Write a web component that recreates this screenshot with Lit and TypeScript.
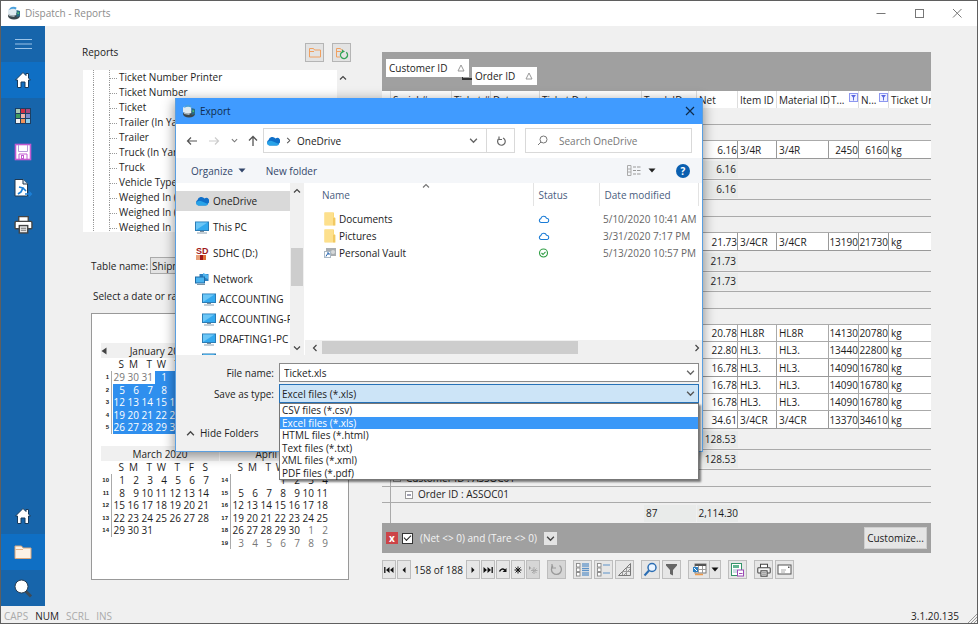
import { LitElement, html, css, svg, nothing } from "lit";
import { customElement, property, state } from "lit/decorators.js";
import { classMap } from "lit/directives/class-map.js";

const icon = (w: number, h: number, body: unknown, label = "") => html`<svg
  width=${w} height=${h} viewBox="0 0 ${w} ${h}" fill="none"
  role=${label ? "img" : "presentation"} aria-label=${label || nothing}>${body}</svg>`;

const truck = () => icon(14, 14, svg`
  <ellipse cx="7" cy="10" rx="6" ry="3.5" fill="#3b474d"/>
  <path d="M1 8V3.5Q4 1 9 2.5L9.5 9Q5 11 1 8Z" fill="#dfeaf0"/>
  <path d="M3 2Q6 0 9.500 1.500L9 3.500Q6 2 2 4Z" fill="#4aa0dc"/>
  <path d="M9.500 4L13 5V10L9.500 11Z" fill="#2a6c86"/>
  <path d="M10.500 6L12 6.500V8L10.500 8Z" fill="#4fc36a"/>
  <path d="M2 8.500L8 10L7 11L2 10Z" fill="#a9b5ba"/>`);

const house = () => icon(18, 18, svg`
  <path d="M9 1.500L1.500 9H3.500V16.500H7V11H11V16.500H14.500V9H16.500L14.500 7V2.500H12V4.500Z"
    fill="#fff" stroke="#163a5c" stroke-width="1"/>`);

const colorGrid = () => {
  const c = ["#a8c8b4", "#d22f45", "#a8487c", "#3f9a5e", "#f0b0a8", "#7d8fd0", "#f2f2f2", "#f0935a", "#8dd0ee"];
  return icon(16, 16, svg`<rect width="16" height="16" fill="#1d3f63"/>${c.map((f, i) =>
    svg`<rect x=${1 + (i % 3) * 5} y=${1 + Math.floor(i / 3) * 5} width="4" height="4" fill=${f}/>`)}`);
};

const floppy = () => icon(18, 18, svg`
  <rect x="1.500" y="1.500" width="15" height="15" fill="#fff" stroke="#c25bd0" stroke-width="1.600"/>
  <path d="M4.500 2V8.500H13.500V2" stroke="#b99ad8"/>
  <path d="M5 16V11H13V16" stroke="#c25bd0"/><rect x="7.500" y="12.500" width="2" height="3" stroke="#c25bd0"/>`);

const exportDoc = () => icon(20, 20, svg`
  <path d="M2 1.500H10L14.500 6V18H2Z" fill="#fff" stroke="#22384e"/>
  <path d="M10 1.500V6H14.500" fill="#dce6ee" stroke="#22384e"/>
  <path d="M6 9L10 10L8 14L5 16M10 10L13 13" stroke="#1c7fd6" stroke-width="1.700"/>
  <path d="M12 16H18M16 13.500L18.500 16L16 18.500" stroke="#1c7fd6" stroke-width="1.300"/>`);

const printer = (s: number, dark: boolean) => html`<svg width=${s} height=${s} viewBox="0 0 18 18" fill="none" role="presentation">
  <path d="M4.500 6V1.500H13.500V6" fill="#fff" stroke="#444" stroke-width="1.300"/>
  <rect x="1" y="6" width="16" height="7" rx="1" fill=${dark ? "#fff" : "#f4f4f4"} stroke="#444" stroke-width="1.300"/>
  <rect x="5" y="10" width="8" height="7" fill="#e8e8e8" stroke="#444" stroke-width="1.300"/>
  <path d="M6.500 12.500H11.500M6.500 14.500H11.500" stroke="#777"/></svg>`;

const folderBig = () => icon(18, 16, svg`
  <path d="M1 14.500V2H7.500L9 4H17V14.500Z" fill="#fdf3e6" stroke="#d9a77c"/><path d="M1.500 5.500H9" stroke="#e5b48c"/>`);

const searchBig = () => icon(20, 20, svg`
  <path d="M12.500 13L18 18.500" stroke="#3d4a56" stroke-width="3"/>
  <circle cx="8.500" cy="8.500" r="6.500" fill="#fff" stroke="#2a3e52" stroke-width="1"/>`);

const folderLine = (refresh: boolean) => icon(14, 14, svg`
  <path d="M1.500 11V2.500H5.500L6.500 4H${refresh ? 8 : 12.5}M1.500 11H${refresh ? 5 : 12.5}${refresh ? "" : "V4"}M1.500 5.500H6" stroke="#f0a060"/>
  ${refresh ? svg`<circle cx="9" cy="9" r="3.500" stroke="#35a457" stroke-width="1.400" stroke-dasharray="18 4" transform="rotate(-50 9 9)"/>
    <path d="M7 3.500L10 5.500L7 7Z" fill="#35a457"/>` : nothing}`);

const cloud = (x = 14) => icon(x, 10, svg`
  <path d="M3.500 9.500A3 3 0 0 1 2.500 4A4 4 0 0 1 9.500 2.500A3 3 0 0 1 13 7.500Q12.500 9.500 10.500 9.500Z" fill="#0f6fc9"/>
  <path d="M3.500 9.500Q1 9 1 6.500Q4 3.500 7 5.500L13 8Q12.500 9.500 10.500 9.500Z" fill="#29a3e8"/>`);

const cloudLine = () => icon(12, 10, svg`
  <path d="M3 8.500A2 2 0 0 1 2.800 4.600A3 3 0 0 1 8.500 4.200A2.200 2.200 0 0 1 9.200 8.500Z" stroke="#1b7cd6" stroke-width="1.100"/>`, "Online only");

const checkRing = () => icon(12, 10, svg`
  <circle cx="5.500" cy="5" r="4" stroke="#2f9e44" stroke-width="1.100"/><path d="M3.500 5L5 6.500L7.500 3.800" stroke="#2f9e44" stroke-width="1.100"/>`, "Available");

const monitor = () => icon(14, 13, svg`
  <rect x=".5" y="1" width="13" height="8.500" fill="#33a9ee" stroke="#2b7cb5"/>
  <path d="M1 9L12.500 1.500H1Z" fill="#6cc6f6"/><path d="M5 10H9V11H5Z" fill="#7a8a96"/><path d="M2 12H12" stroke="#8ba0b0"/>`);

const network = () => icon(14, 13, svg`
  <rect x="4.500" y="1" width="9" height="7" fill="#2c7fc0"/><path d="M8 0L13 2V6L8 4Z" fill="#4fb4ef"/>
  <rect x=".5" y="4" width="9" height="6" fill="#4ab4f0" stroke="#1f6ba5"/><path d="M2 11.500H10" stroke="#7f95a5"/>`);

const sdCard = () => html`<span class="sd" aria-hidden="true">SD${icon(10, 5, svg`
  <rect width="4" height="5" fill="#e8a07a"/><rect x="4" width="3" height="5" fill="#a01818"/><rect x="7" width="3" height="5" fill="#e07038"/>`)}</span>`;

const yellowFolder = () => icon(12, 14, svg`
  <path d="M.5 .5H10V5L11.500 6V13.500H.5Z" fill="#fbd979"/><path d="M.5 .5H9V13H.5Z" fill="#fde08d"/><path d="M10 6V13.500" stroke="#e8b94e"/>`);

const vault = () => icon(12, 12, svg`
  <rect x="2" y="1" width="10" height="8" fill="#a8adb1"/><circle cx="9" cy="5" r="2" fill="#d5d8da"/>
  <rect x=".5" y="4.500" width="6" height="6" fill="#fff" stroke="#aab8c4"/><path d="M2 9.500Q2.500 7 4.500 6.500M3 6H5V8" stroke="#2463ad"/>`);

const chevron = (dir: "up" | "down" | "left" | "right", size = 8, color = "#444") => {
  const d = { up: "M1 5.500L4 2.500L7 5.500", down: "M1 2.500L4 5.500L7 2.500", left: "M5.500 1L2.500 4L5.500 7", right: "M2.500 1L5.500 4L2.500 7" }[dir];
  return html`<svg width=${size} height=${size} viewBox="0 0 8 8" fill="none" role="presentation"><path d=${d} stroke=${color} stroke-width="1.200"/></svg>`;
};

const caret = (color = "#222") => icon(8, 5, svg`<path d="M.5 .5H7.500L4 4.500Z" fill=${color}/>`);
const triUp = () => icon(8, 8, svg`<path d="M4 1L7 7H1Z" stroke="#999"/>`);
const funnelBox = () => icon(9, 9, svg`
  <rect x=".5" y=".5" width="8" height="8" fill="#eef0ff" stroke="#8d97f0"/><path d="M2 2H7L5 4.500V7.500H4V4.500Z" fill="#5a67e0"/>`, "Filtered");

const nav = {
  first: () => icon(10, 8, svg`<path d="M.8 1V7" stroke="#111" stroke-width="1.300"/><path d="M5.500 1V7L2 4ZM9.500 1V7L6 4Z" fill="#111"/>`),
  prev: () => icon(6, 8, svg`<path d="M4.500 1V7L1.500 4Z" fill="#111"/>`),
  next: () => icon(6, 8, svg`<path d="M1.500 1V7L4.500 4Z" fill="#111"/>`),
  last: () => icon(10, 8, svg`<path d="M9.200 1V7" stroke="#111" stroke-width="1.300"/><path d="M.5 1V7L4 4ZM4.500 1V7L8 4Z" fill="#111"/>`),
  jump: () => icon(10, 8, svg`<path d="M1.500 5.500Q3.500 1.500 7 4" stroke="#111" stroke-width="1.500"/><path d="M8.500 2V6H4.500Z" fill="#111"/>`),
  star: () => icon(10, 8, svg`<path d="M5 .5V7.500M1.500 4H8.500M2.500 1.500L7.500 6.500M7.500 1.500L2.500 6.500" stroke="#111"/>`),
  starOff: () => icon(10, 8, svg`<path d="M6 1V8M3 4.500H9.500M4 2.500L8.500 7M8.500 2.500L4 7" stroke="#aaa"/><path d="M1 0V4L3 2Z" fill="#999"/>`),
};

const tool = {
  refresh: () => icon(15, 15, svg`<path d="M4 3.800A5 5 0 1 0 10.500 3.500" stroke="#999" stroke-width="1.300"/><path d="M3 2V6H7" stroke="#999" stroke-width="1.200"/>`),
  cards: (blue: boolean) => icon(15, 15, svg`
    ${[1, 5.5, 10].map((y) => svg`<rect x="1.500" y=${y + 0.5} width="3.500" height="3.500" fill="#fff" stroke="#888" stroke-width=".9"/>`)}
    ${blue ? [2, 4, 6.5, 8.5, 11, 13].map((y) => svg`<path d=${`M7 ${y}H14`} stroke="#5c92c8" stroke-width="1.300"/>`)
           : [3, 11].map((y) => svg`<path d=${`M7 ${y}H14`} stroke="#5c92c8"/>`)}`),
  ruler: () => icon(15, 15, svg`<path d="M1.500 13.500L13.500 1.500V13.500Z" stroke="#777"/><path d="M5.500 13V9.500H13M9.500 13V5.500H13M7 13L13 7" stroke="#999"/>`),
  lens: () => icon(15, 15, svg`<circle cx="9" cy="5.500" r="4" fill="#eaf4ff" stroke="#2b6db3" stroke-width="1.500"/><path d="M6 8.500L1.500 13.500" stroke="#2b6db3" stroke-width="2"/>`),
  funnel: () => icon(15, 15, svg`<path d="M2 2H13V3.500L9 8V13.500L6 12V8L2 3.500Z" fill="#666"/>`),
  table: () => icon(15, 15, svg`<rect x="3" y="2" width="11" height="9" fill="#fff" stroke="#777"/><path d="M3 3H14" stroke="#555" stroke-width="2"/>
    <path d="M3 7.500H14M6.500 4V11M10.500 4V11" stroke="#999"/><rect x="1" y="5" width="5" height="5" fill="#2a7fc4"/><path d="M2 6L5 9" stroke="#fff"/><path d="M3 12.500H11" stroke="#ef9a4a" stroke-width="1.500"/>`),
  saveGreen: () => icon(15, 15, svg`<rect x="1.500" y="1.500" width="10" height="12" fill="#fff" stroke="#35946a"/><rect x="3" y="3" width="6" height="3" fill="#63b491"/>
    <path d="M3 8H7M3 10H7" stroke="#9bc"/><rect x="7.500" y="8" width="6" height="6" fill="#fff" stroke="#9a48b5"/><path d="M9 11.500H12.500" stroke="#9a48b5"/>`),
  mail: () => icon(15, 15, svg`<rect x="1" y="3" width="13" height="9" fill="#fff" stroke="#555"/><path d="M4 8H9M4 10H8" stroke="#aaa"/><rect x="11" y="4.500" width="1.500" height="1.500" fill="#555"/>`),
};

interface Month { name: string; weeks: number[]; offset: number; days: number; back?: boolean; selected?: boolean; lead?: number[]; trail?: number[]; }

@customElement("month-view")
class MonthView extends LitElement {
  @property({ attribute: false }) month!: Month;

  static styles = css`
    :host { display: block; font-size: 10px; }
    header { display: grid; grid-template-columns: 10px 1fr 10px; align-items: center; height: 15px; background: #f0f0f0; text-align: center; white-space: nowrap; }
    button { border: 0; background: none; padding: 0; display: flex; justify-content: flex-end; }
    .grid { display: grid; grid-template-columns: 10px 2px repeat(7, 14px); height: 88px; grid-template-rows: 13px repeat(6, 1fr); line-height: 12px; }
    .day, .dow { text-align: right; padding-right: 2px; }
    .dow { padding-right: 3px; }
    .week { font: bold 6px/12px "Liberation Sans", sans-serif; text-align: right; padding-right: 2px; }
    .rule { border-left: 1px solid #aaa; }
    .muted { color: #777; }
    .sel { background: #2f8fee; color: #fff; }
  `;

  render() {
    const m = this.month;
    const cells: { n: number | null; cur: boolean }[] = [
      ...(m.lead ?? Array(m.offset).fill(null)).map((n) => ({ n, cur: false })),
      ...Array.from({ length: m.days }, (_, i) => ({ n: i + 1, cur: true })),
      ...(m.trail ?? []).map((n) => ({ n, cur: false })),
    ];
    return html`
      <header>
        <span>${m.back ? html`<button aria-label="Previous month">${icon(6, 8, svg`<path d="M5.500 .5V7.500L.5 4Z" fill="#444"/>`)}</button>` : nothing}</span>
        <span>${m.name}</span>
      </header>
      <div class="grid">
        <span></span><span></span>${["S", "M", "T", "W", "T", "F", "S"].map((d) => html`<span class="dow">${d}</span>`)}
        ${m.weeks.map((w, r) => html`
          <span class="week">${w}</span><span class="rule"></span>
          ${Array.from({ length: 7 }, (_, c) => {
            const cell = cells[r * 7 + c];
            return html`<span class=${classMap({ day: true, muted: !!cell && !cell.cur, sel: !!m.selected && !!cell?.cur })}>${cell?.n ?? ""}</span>`;
          })}`)}
      </div>`;
  }
}

const MONTHS: Month[] = [
  { name: "January 2020", weeks: [1, 2, 3, 4, 5], back: true, selected: true, lead: [29, 30, 31], days: 31, offset: 3 },
  { name: "February 2020", weeks: [5, 6, 7, 8, 9], selected: true, days: 29, offset: 6 },
  { name: "March 2020", weeks: [10, 11, 12, 13, 14], days: 31, offset: 0 },
  { name: "April 2020", weeks: [14, 15, 16, 17, 18, 19], days: 30, offset: 3, trail: [1, 2, 3, 4, 5, 6, 7, 8, 9] },
];

@customElement("export-dialog")
class ExportDialog extends LitElement {
  @state() private picked = 1;

  private types = ["CSV files (*.csv)", "Excel files (*.xls)", "HTML files (*.html)", "Text files (*.txt)", "XML files (*.xml)", "PDF files (*.pdf)"];

  static styles = css`
    * { box-sizing: border-box; }
    :host { display: flex; flex-direction: column; border: 1px solid #5a9fe0; border-top: 0; background: #fff; color: #222; box-shadow: 0 3px 12px rgba(0, 0, 0, 0.45); }
    svg { display: block; flex: none; }
    button { font: inherit; color: inherit; border: 0; background: none; padding: 0; display: flex; align-items: center; gap: 5px; }
    input, select { font: inherit; color: inherit; appearance: none; border: 0; background: none; padding: 0; outline: 0; min-width: 0; }
    .title { display: flex; align-items: center; gap: 4px; height: 26px; padding: 0 6px; background: #409bff; color: #0f2c4c; }
    .title span { flex: 1; }
    .nav { display: flex; align-items: center; height: 34px; padding: 0 10px 1px; gap: 10px; }
    .arrows { display: flex; align-items: center; justify-content: space-between; width: 72px; }
    .box { display: flex; align-items: center; height: 25px; border: 1px solid #d9d9d9; }
    .address { flex: 1; gap: 5px; padding-left: 2px; margin-left: -5px; }
    .address .path { flex: 1; }
    .address .reload { height: 23px; width: 28px; border-left: 1px solid #d9d9d9; justify-content: center; margin-left: 3px; }
    .search { width: 167px; gap: 11px; padding-left: 11px; }
    .search input::placeholder { color: #777; opacity: 1; }
    .tools { display: flex; align-items: center; height: 25px; padding: 0 12px 0 15px; gap: 20px; background: #f4f6f9; color: #33466b; }
    .tools .view { margin-left: auto; gap: 7px; color: #222; }
    .help { width: 14px; height: 14px; border-radius: 50%; background: #0a5fb0; color: #fff; font-weight: bold; justify-content: center; }
    .body { display: flex; height: 172px; }
    .places { width: 114px; padding: 8px 0 0; margin: 0; list-style: none; overflow: hidden; flex: none; }
    .places li { display: flex; align-items: center; gap: 4px; height: 20px; padding-left: 19px; white-space: nowrap; margin-bottom: 6px; }
    .places li.child { padding-left: 26px; gap: 3px; margin: 0; }
    .places li.tight { margin-bottom: 0; }
    .places li.on { background: #d9d9d9; }
    .sd { width: 14px; padding-left: 1px; color: #a01818; font: bold 9px/8px "Liberation Sans", sans-serif; }
    .vbar { width: 14px; display: flex; flex-direction: column; align-items: center; background: #f0f0f0; padding: 4px 0 3px; flex: none; }
    .vthumb { width: 12px; height: 38px; background: #cdcdcd; margin-top: 53px; }
    .vbar svg:last-child { margin-top: auto; }
    .files { flex: 1; display: flex; flex-direction: column; min-width: 0; padding-left: 1px; }
    table { border-collapse: collapse; table-layout: fixed; width: 100%; }
    th { font-weight: normal; text-align: left; height: 23px; color: #4a5d7e; padding: 0 0 0 5px; border-right: 1px solid #e3e3e3; }
    th.name { padding-left: 17px; position: relative; }
    .sort { position: absolute; right: 103px; top: -1px; }
    td { height: 17px; padding: 0 0 0 5px; white-space: nowrap; }
    td.name { padding-left: 19px; }
    td span { display: flex; align-items: center; gap: 3px; }
    td.dim { color: #666; padding-left: 4px; }
    tr.space td { height: 4px; }
    .hbar { display: flex; align-items: center; gap: 3px; height: 15px; margin-top: auto; padding: 0 1px 0 6px; background: #f0f0f0; }
    .hthumb { width: 256px; height: 13px; background: #cdcdcd; }
    .hbar svg:last-child { margin-left: auto; }
    form { flex: 1; display: grid; grid-template-columns: 98px 1fr; grid-auto-rows: 19px; column-gap: 5px; row-gap: 2px; padding: 8px 3px 0 0; background: #f0f0f0; position: relative; align-content: start; align-items: center; }
    label { text-align: right; }
    .field { display: flex; align-items: center; height: 19px; border: 1px solid #8a8a8a; background: #fff; padding: 0 3px 0 4px; }
    .field input, .field select { flex: 1; }
    .field.open { background: #cce4f7; border-color: #2672b8; padding-left: 2px; }
    .hide { grid-column: 1 / 3; margin: 37px 0 0 10px; gap: 5px; }
    .list { position: absolute; z-index: 2; left: 103px; right: 3px; top: 48px; margin: 0; padding: 0; list-style: none; display: grid; grid-template-rows: repeat(6, 1fr); height: 77px; background: #fff; border: 1px solid #777; box-shadow: 2px 2px 2px rgba(0, 0, 0, 0.5); line-height: 12px; color: #222; }
    .list li { padding-left: 2px; }
    .list li.on { background: #3a98f8; color: #fff; }
  `;

  render() {
    return html`
      <div class="title">${truck()}<span>Export</span>
        <button aria-label="Close">${icon(12, 12, svg`<path d="M2 2L10 10M10 2L2 10" stroke="#0f2c4c" stroke-width="1.200"/>`)}</button></div>
      <div class="nav">
        <div class="arrows">
          <button aria-label="Back">${icon(12, 10, svg`<path d="M11 5H1.500M5 1.500L1.500 5L5 8.500" stroke="#555" stroke-width="1.200"/>`)}</button>
          <button aria-label="Forward">${icon(12, 10, svg`<path d="M1 5H10.500M7 1.500L10.500 5L7 8.500" stroke="#ccc" stroke-width="1.200"/>`)}</button>
          <button aria-label="Recent locations">${chevron("down", 7, "#777")}</button>
          <button aria-label="Up">${icon(10, 12, svg`<path d="M5 11V1.500M1 5.500L5 1.500L9 5.500" stroke="#555" stroke-width="1.300"/>`)}</button>
        </div>
        <div class="box address">${cloud()}${chevron("right", 7, "#555")}<span class="path">OneDrive</span>${chevron("down", 9, "#666")}
          <button class="reload" aria-label="Refresh">${icon(10, 10, svg`<path d="M2.500 3A3.800 3.800 0 1 0 7 2" stroke="#666" stroke-width="1.200"/><path d="M3 .5V3.500H6" stroke="#666" stroke-width="1.200"/>`)}</button></div>
        <div class="box search">${icon(11, 11, svg`<circle cx="6.500" cy="4.500" r="3.500" stroke="#777"/><path d="M4 7L1 10" stroke="#777"/>`)}
          <input type="search" aria-label="Search OneDrive" placeholder="Search OneDrive"></div>
      </div>
      <div class="tools">
        <button>Organize ${caret("#33466b")}</button><button>New folder</button>
        <button class="view" aria-label="Change view">${icon(14, 11, svg`<path d="M.5 .5H4V10.500H.5ZM.5 4H4M.5 7H4" stroke="#aaa"/>
          <path d="M6 2H9M10 2H13.500M6 5.500H9M10 5.500H13.500M6 9H9M10 9H13.500" stroke="#999"/>`)}${caret()}</button>
        <button class="help" aria-label="Help">?</button>
      </div>
      <div class="body">
        <ul class="places">
          <li class="on">${cloud()}OneDrive</li>
          <li>${monitor()}This PC</li>
          <li>${sdCard()}SDHC (D:)</li>
          <li class="tight">${network()}Network</li>
          ${["ACCOUNTING", "ACCOUNTING-PC", "DRAFTING1-PC", "DRAFTING2-PC"].map((n) => html`<li class="child">${monitor()}${n}</li>`)}
        </ul>
        <div class="vbar">${chevron("up")}<div class="vthumb"></div>${chevron("down")}</div>
        <div class="files">
          <table>
            <colgroup><col><col style="width:66px"><col style="width:99px"><col style="width:4px"></colgroup>
            <thead><tr><th class="name">Name<span class="sort">${chevron("up", 8, "#777")}</span></th><th>Status</th><th>Date modified</th><td></td></tr></thead>
            <tbody>
              <tr class="space"><td colspan="4"></td></tr>
              <tr><td class="name"><span>${yellowFolder()}Documents</span></td><td>${cloudLine()}</td><td class="dim">5/10/2020 10:41 AM</td></tr>
              <tr><td class="name"><span>${yellowFolder()}Pictures</span></td><td>${cloudLine()}</td><td class="dim">3/31/2020 7:17 PM</td></tr>
              <tr><td class="name"><span>${vault()}Personal Vault</span></td><td>${checkRing()}</td><td class="dim">5/13/2020 10:57 PM</td></tr>
            </tbody>
          </table>
          <div class="hbar">${chevron("left")}<div class="hthumb"></div>${chevron("right")}</div>
        </div>
      </div>
      <form @submit=${(e: Event) => e.preventDefault()}>
        <label for="file">File name:</label>
        <div class="field"><input id="file" type="text" value="Ticket.xls">${chevron("down", 9, "#666")}</div>
        <label for="type">Save as type:</label>
        <div class="field open"><select id="type">${this.types.map((t, i) => html`<option ?selected=${i === this.picked}>${t}</option>`)}</select>${chevron("down", 9, "#555")}</div>
        <button class="hide" type="button">${chevron("up", 9)}Hide Folders</button>
        <ul class="list" role="listbox" aria-label="File types">
          ${this.types.map((t, i) => html`<li role="option" aria-selected=${i === this.picked} class=${classMap({ on: i === this.picked })} @click=${() => (this.picked = i)}>${t}</li>`)}
        </ul>
      </form>`;
  }
}

type Row =
  | { kind: "outer" | "inner"; label: string }
  | { kind: "data"; cells: string[]; tall?: boolean }
  | { kind: "foot" | "sub" | "total"; count: string; net: string };

const data = (net: string, item: string, tare: string, gross: string, tall = false): Row => ({ kind: "data", cells: [net, item, item, tare, gross, "kg"], tall });

const ROWS: Row[] = [
  { kind: "outer", label: "Customer ID : ABC01" }, { kind: "inner", label: "Order ID : ABC01" },
  data("6.16", "3/4R", "2450", "6160", true),
  { kind: "foot", count: "1", net: "6.16" }, { kind: "sub", count: "1", net: "6.16" },
  { kind: "outer", label: "Customer ID : ACME01" }, { kind: "inner", label: "Order ID : ACME01" },
  data("21.73", "3/4CR", "13190", "21730", true),
  { kind: "foot", count: "1", net: "21.73" }, { kind: "sub", count: "1", net: "21.73" },
  { kind: "outer", label: "Customer ID : AGG01" }, { kind: "inner", label: "Order ID : AGG01" },
  data("20.78", "HL8R", "14130", "20780"), data("22.80", "HL3.", "13440", "22800"), data("16.78", "HL3.", "14090", "16780", true),
  data("16.78", "HL3.", "14090", "16780"), data("16.78", "HL3.", "14090", "16780"), data("34.61", "3/4CR", "13370", "34610", true),
  { kind: "foot", count: "6", net: "128.53" }, { kind: "sub", count: "6", net: "128.53" },
  { kind: "outer", label: "Customer ID : ASSOC01" }, { kind: "inner", label: "Order ID : ASSOC01" },
  { kind: "total", count: "87", net: "2,114.30" },
];

@customElement("app-root")
class AppRoot extends LitElement {
  static styles = css`
    * { box-sizing: border-box; }
    :host { display: flex; flex-direction: column; min-height: 100vh; box-sizing: border-box; position: relative; border: 1px solid #5f5f5f; background: #f0f0f0; color: #1c1c1c; font: 10px/14px "Open Sans", "Noto Sans", sans-serif; overflow: hidden; }
    svg { display: block; flex: none; }
    button { font: inherit; color: inherit; padding: 0; border: 0; background: none; display: flex; align-items: center; justify-content: center; }
    .titlebar { display: flex; align-items: center; gap: 4px; height: 25px; padding: 0 14px 2px 6px; background: #fff; color: #8c8c8c; }
    .titlebar .controls { margin-left: auto; display: flex; gap: 26px; }
    .frame { flex: 1; display: flex; }
    nav { width: 44px; background: #1765ab; display: flex; flex-direction: column; flex: none; }
    nav button { height: 36px; }
    nav .on { background: #0f6fc4; }
    nav .push { margin-top: auto; }
    .left { width: 267px; margin-left: 38px; padding-top: 17px; flex: none; }
    .head { display: flex; align-items: center; gap: 8px; height: 19px; margin-right: -1px; }
    .head h1 { font: inherit; line-height: 14px; margin: 0 auto 2px -1px; }
    .head button { width: 19px; height: 19px; border: 1px solid #b5b5b5; background: #e3e3e3; }
    .treebox { display: flex; margin-top: 8px; }
    .tree { flex: 1; height: 162px; overflow: hidden; margin: 0; padding: 0 0 0 10px; list-style: none; background: #fff; }
    .tree li { height: 15px; line-height: 15px; border-left: 1px dotted #999; padding-left: 15px; display: flex; }
    .tree li span { border-left: 1px dotted #999; padding-left: 9px; position: relative; }
    .tree li span::before { content: ""; position: absolute; left: 0; top: 8px; width: 7px; border-top: 1px dotted #999; }
    .treebar { width: 13px; padding: 4px 2px; }
    .tname { display: flex; align-items: center; gap: 2px; margin: 25px 0 0 8px; height: 17px; white-space: nowrap; }
    select { font: inherit; color: inherit; appearance: none; height: 17px; width: 120px; border: 1px solid #aaa; background: #e3e3e3; padding: 0 1px; border-radius: 0; }
    .pick { margin: 15px 0 0 10px; height: 16px; }
    .calendar { margin: 8px 1px 0 8px; height: 267px; border: 1px solid #999; background: #fff; display: grid; grid-template-columns: 118px 118px; column-gap: 1px; padding: 29px 0 0 9px; align-content: start; }
    .right { flex: 1; min-width: 0; margin: 26px 46px 0 32px; }
    .groups { display: flex; height: 39px; background: #a0a0a0; padding: 7px 4px; position: relative; }
    .chip { display: flex; align-items: center; justify-content: space-between; height: 18px; padding: 0 4px 0 3px; background: #fff; }
    .chip.one { width: 83px; }
    .chip.two { width: 65px; margin: 8px 0 0 3px; }
    .link { position: absolute; left: 80px; top: 25px; width: 10px; height: 3px; border: solid #333; border-width: 0 0 2px 1px; }
    table { border-collapse: separate; border-spacing: 0; table-layout: fixed; width: 100%; line-height: 14px; }
    th { height: 17px; padding: 0 0 0 2px; font-weight: normal; text-align: left; background: #fff; border-right: 1px solid #ddd; white-space: nowrap; }
    th:last-child { overflow: hidden; border: 0; }
    th span { display: flex; justify-content: space-between; align-items: flex-start; }
    td { padding: 0 2px; white-space: nowrap; overflow: hidden; border-bottom: 1px solid #aaa; height: 17px; }
    .outer td { height: 17px; } .inner td { height: 16px; line-height: 13px; }
    .foot td { height: 21px; } .sub td { height: 20px; } .total td { height: 20px; border-bottom: 0; }
    .data td { background: #fff; border-right: 1px solid #aaa; }
    .data td:last-child { border-right: 0; }
    .data.tall td { height: 18px; border-color: #999; }
    td.stub, .data td.stub { background: #f0f0f0; border-right: 1px solid #aaa; }
    td.num, .total td.num { text-align: right; padding: 0; }
    .sum { display: block; height: 17px; line-height: 16px; background: #e9ebea; padding: 0 1px 0 2px; margin: 0 -1px 0 0; }
    .num .sum { margin: 0 0 0 1px; padding: 0 2px; }
    .total .num .sum { padding: 0; margin: 0; }
    .exp { display: flex; align-items: center; gap: 5px; }
    .inner .exp { padding-left: 9px; margin-left: 3px; }
    .filter { display: flex; align-items: center; height: 30px; padding: 0 4px; background: #a0a0a0; color: #f4f4f4; }
    .clear { width: 12px; height: 12px; background: #cc4448; color: #fff; font-weight: bold; line-height: 10px; }
    .filter input { appearance: none; width: 11px; height: 11px; margin: 0 7px 0 4px; border: 1px solid #333; background: #fff; display: grid; place-items: center; }
    .filter input::before { content: ""; width: 6px; height: 3px; border: solid #222; border-width: 0 0 1px 1px; transform: translateY(-1px) rotate(-45deg); }
    .drop { width: 13px; height: 13px; margin-left: 7px; background: #e3e3e3; }
    .custom { margin-left: auto; width: 63px; height: 22px; background: #e5e5e5; border: 1px solid #cfcfcf; color: #1c1c1c; }
    .bar { display: flex; gap: 7px; margin-top: 7px; }
    .bar div { display: flex; gap: 2px; }
    .bar div.nav { gap: 1px; align-items: center; }
    .bar button { width: 19px; height: 19px; border: 1px solid #bdbdbd; background: #e6e6e6; }
    .bar .nav button { width: 14px; }
    .bar .off { background: #d6d6d6; }
    .bar .split { gap: 0; }
    .bar .split button:first-child { width: 21px; border-right: 0; }
    .bar .split button:last-child { width: 12px; }
    .count { width: 53px; text-align: center; white-space: nowrap; }
    footer { display: flex; align-items: center; gap: 7px; height: 17px; padding: 2px 18px 0 3px; color: #aaa; position: relative; }
    footer b { font-weight: normal; color: #1c1c1c; }
    footer .ver { margin-left: auto; color: #1c1c1c; }
    .grip { position: absolute; right: 0; bottom: 0; }
    export-dialog { position: absolute; left: 174px; top: 97px; width: 528px; height: 354px; }
  `;

  private gridRow(r: Row) {
    if (r.kind === "outer" || r.kind === "inner") {
      const box = icon(8, 8, svg`<rect x=".5" y=".5" width="7" height="7" fill="#fff" stroke="#999"/><path d="M2 4H6" stroke="#446"/>`);
      return html`<tr class=${r.kind}><td class="stub"></td><td colspan="11"><span class="exp">${box}${r.label}</span></td></tr>`;
    }
    if (r.kind === "data") {
      const [net, item, mat, tare, gross, unit] = r.cells;
      return html`<tr class=${classMap({ data: true, tall: !!r.tall })}><td class="stub"></td><td></td><td></td><td></td><td></td><td></td>
        <td class="num">${net}</td><td>${item}</td><td>${mat}</td><td class="num">${tare}</td><td class="num">${gross}</td><td>${unit}</td></tr>`;
    }
    return html`<tr class=${r.kind}><td class="stub"></td><td colspan="4"></td><td><span class="sum">${r.count}</span></td>
      <td class="num"><span class="sum">${r.net}</span></td><td colspan="5"></td></tr>`;
  }

  render() {
    const tree = ["Ticket Number Printer", "Ticket Number", "Ticket", "Trailer (In Yard)", "Trailer", "Truck (In Yard)", "Truck", "Vehicle Type", "Weighed In (Job)", "Weighed In (Yard)", "Weighed In"];
    const widths = [9, 61, 39, 49, 102, 55, 41, 39, 52, 30, 30];
    return html`
      <div class="titlebar">${truck()}Dispatch - Reports
        <div class="controls">
          <button aria-label="Minimize">${icon(12, 12, svg`<path d="M1.500 6.500H10.500" stroke="#777"/>`)}</button>
          <button aria-label="Maximize">${icon(12, 12, svg`<rect x="2.500" y="2.500" width="8" height="8" stroke="#777"/>`)}</button>
          <button aria-label="Close">${icon(12, 12, svg`<path d="M2 2L10.500 10.500M10.500 2L2 10.500" stroke="#777"/>`)}</button>
        </div>
      </div>
      <div class="frame">
        <nav>
          <button aria-label="Menu">${icon(17, 12, svg`<path d="M0 1.500H17M0 6H17M0 10.500H17" stroke="#9cc4e8"/>`)}</button>
          <button class="on" aria-label="Home">${house()}</button>
          <button aria-label="Modules">${colorGrid()}</button>
          <button aria-label="Save">${floppy()}</button>
          <button aria-label="Export">${exportDoc()}</button>
          <button aria-label="Print">${printer(19, true)}</button>
          <button class="push" aria-label="Start page">${house()}</button>
          <button class="on" aria-label="Reports">${folderBig()}</button>
          <button aria-label="Search">${searchBig()}</button>
        </nav>
        <section class="left">
          <div class="head"><h1>Reports</h1>
            <button aria-label="Open folder">${folderLine(false)}</button>
            <button aria-label="Refresh folder">${folderLine(true)}</button></div>
          <div class="treebox">
            <ul class="tree">${tree.map((t) => html`<li><span>${t}</span></li>`)}</ul>
            <div class="treebar">${chevron("up")}</div>
          </div>
          <div class="tname"><label for="table">Table name:</label><select id="table"><option>Shipment</option></select></div>
          <div class="pick">Select a date or range</div>
          <div class="calendar">${MONTHS.map((m) => html`<month-view .month=${m}></month-view>`)}</div>
        </section>
        <section class="right">
          <div class="groups">
            <div class="chip one">Customer ID ${triUp()}</div><div class="chip two">Order ID ${triUp()}</div><div class="link"></div>
          </div>
          <table>
            <colgroup>${widths.map((w) => html`<col style="width:${w}px">`)}<col></colgroup>
            <thead><tr><th></th><th>Serial #</th><th>Ticket #</th><th>Date</th><th>Ticket Date</th><th>Truck ID</th><th>Net</th><th>Item ID</th><th>Material ID</th>
              <th><span>T... ${funnelBox()}</span></th><th><span>N...${funnelBox()}</span></th><th>Ticket Unit</th></tr></thead>
            <tbody>${ROWS.map((r) => this.gridRow(r))}</tbody>
          </table>
          <div class="filter">
            <button class="clear" aria-label="Clear filter">x</button>
            <input type="checkbox" id="flt" checked><label for="flt">(Net &lt;&gt; 0) and (Tare &lt;&gt; 0)</label>
            <button class="drop" aria-label="Recent filters">${chevron("down", 9)}</button>
            <button class="custom">Customize...</button>
          </div>
          <div class="bar">
            <div class="nav">
              <button aria-label="First">${nav.first()}</button><button aria-label="Previous">${nav.prev()}</button>
              <span class="count">158 of 188</span>
              <button aria-label="Next">${nav.next()}</button><button aria-label="Last">${nav.last()}</button>
              <button aria-label="Go to">${nav.jump()}</button><button aria-label="Bookmark">${nav.star()}</button>
              <button class="off" aria-label="Go to bookmark">${nav.starOff()}</button>
            </div>
            <div><button class="off" aria-label="Refresh">${tool.refresh()}</button></div>
            <div><button aria-label="Expand all">${tool.cards(true)}</button><button aria-label="Collapse all">${tool.cards(false)}</button><button aria-label="Best fit">${tool.ruler()}</button></div>
            <div><button aria-label="Find">${tool.lens()}</button><button aria-label="Filter">${tool.funnel()}</button></div>
            <div class="split"><button aria-label="Layouts">${tool.table()}</button><button aria-label="More layouts">${caret("#111")}</button></div>
            <div><button aria-label="Save to file">${tool.saveGreen()}</button></div>
            <div><button aria-label="Print">${printer(14, false)}</button><button aria-label="Mail">${tool.mail()}</button></div>
          </div>
        </section>
      </div>
      <footer><span>CAPS</span><b>NUM</b><span>SCRL</span><span>INS</span><span class="ver">3.1.20.135</span>
        <span class="grip">${icon(10, 10, svg`<path d="M1 10L10 1M4 10L10 4M7 10L10 7" stroke="#999"/>`)}</span></footer>
      <export-dialog role="dialog" aria-label="Export"></export-dialog>`;
  }
}
